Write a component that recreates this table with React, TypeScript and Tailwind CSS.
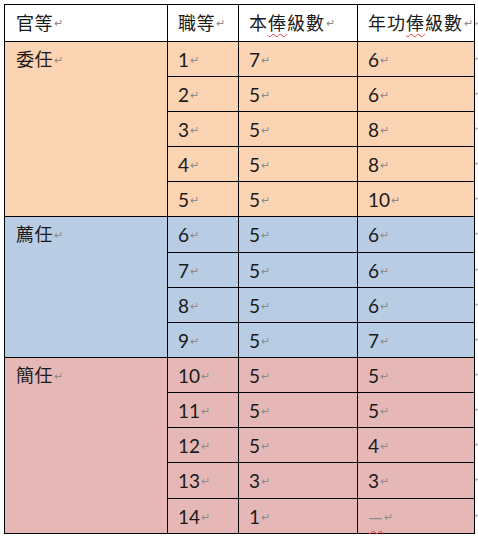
import React from 'react';

type Row = { grade: string; base: string; merit: string };

interface Group {
    name: string;
    bg: string;
    rows: Row[];
}

const groups: Group[] = [
    {
        name: '委任',
        bg: 'bg-[#fbd4b4]',
        rows: [
            { grade: '1', base: '7', merit: '6' },
            { grade: '2', base: '5', merit: '6' },
            { grade: '3', base: '5', merit: '8' },
            { grade: '4', base: '5', merit: '8' },
            { grade: '5', base: '5', merit: '10' },
        ],
    },
    {
        name: '薦任',
        bg: 'bg-[#b8cce4]',
        rows: [
            { grade: '6', base: '5', merit: '6' },
            { grade: '7', base: '5', merit: '6' },
            { grade: '8', base: '5', merit: '6' },
            { grade: '9', base: '5', merit: '7' },
        ],
    },
    {
        name: '簡任',
        bg: 'bg-[#e5b8b7]',
        rows: [
            { grade: '10', base: '5', merit: '5' },
            { grade: '11', base: '5', merit: '5' },
            { grade: '12', base: '5', merit: '4' },
            { grade: '13', base: '3', merit: '3' },
            { grade: '14', base: '1', merit: '—' },
        ],
    },
];

// a few rows are one pixel taller, as Word laid them out
const tall = new Set(['6', '13']);

const Mark = () => <span className="ml-[1px] text-[11px] text-[#8c8c8c] align-middle">↵</span>;

const Wavy: React.FC<{ children: React.ReactNode }> = ({ children }) => (
    <span className="underline decoration-wavy decoration-[#e04040] decoration-1 underline-offset-[3px]">{children}</span>
);

const cell = 'border border-black align-top p-0';
const num = 'h-[33px] flex items-center pl-[10px] pt-[1px] text-[19px] text-[#1a1a1a] leading-none';

const App: React.FC = () => {
    return (
        <div className="w-[478px] h-[536px] bg-white pt-[4px] pl-[4px] overflow-hidden font-['Lato','Noto_Sans_CJK_TC',sans-serif]">
            <table className="w-[474px] border-collapse table-fixed">
                <colgroup>
                    <col className="w-[163px]" />
                    <col className="w-[71px]" />
                    <col className="w-[119px]" />
                    <col className="w-[117px]" />
                    <col className="w-[4px]" />
                </colgroup>
                <tbody>
                    <tr className="h-[37px] bg-white">
                        <td className={cell}>
                            <div className="h-[35px] flex items-center pl-[11px] text-[18px] text-[#1a1a1a] leading-none tracking-[0.5px]">官等<Mark /></div>
                        </td>
                        <td className={cell}>
                            <div className="h-[35px] flex items-center pl-[10px] text-[18px] text-[#1a1a1a] leading-none tracking-[0.5px]">職等<Mark /></div>
                        </td>
                        <td className={cell}>
                            <div className="h-[35px] flex items-center pl-[10px] text-[18px] text-[#1a1a1a] leading-none tracking-[1px]">本<Wavy>俸</Wavy>級數<Mark /></div>
                        </td>
                        <td className={cell}>
                            <div className="h-[35px] flex items-center pl-[10px] text-[18px] text-[#1a1a1a] leading-none tracking-[1px]">年功<Wavy>俸</Wavy>級數<Mark /></div>
                        </td>
                        <td className="p-0 align-middle">
                            <div className="h-[35px] flex items-center text-[7px] leading-none text-[#8c8c8c]">↵</div>
                        </td>
                    </tr>
                    {groups.map((g) =>
                        g.rows.map((r, i) => (
                            <tr key={r.grade} className={`${tall.has(r.grade) ? 'h-[36px]' : 'h-[35px]'} ${g.bg}`}>
                                {i === 0 && (
                                    <td className={cell} rowSpan={g.rows.length}>
                                        <div className="h-[33px] flex items-center pl-[11px] pt-[1px] text-[18px] text-[#1a1a1a] leading-none tracking-[0.5px]">
                                            {g.name}
                                            <Mark />
                                        </div>
                                    </td>
                                )}
                                <td className={cell}>
                                    <div className={num}>{r.grade}<Mark /></div>
                                </td>
                                <td className={cell}>
                                    <div className={num}>{r.base}<Mark /></div>
                                </td>
                                <td className={cell}>
                                    <div className={num}>
                                        {r.merit === '—' ? (
                                            <span className="underline decoration-wavy decoration-[#e04040] decoration-1 underline-offset-[6px] text-[#8c8c8c]">—</span>
                                        ) : (
                                            r.merit
                                        )}
                                        <Mark />
                                    </div>
                                </td>
                                <td className="p-0 align-top bg-white">
                                    <div className="h-[33px] flex items-center text-[7px] leading-none text-[#8c8c8c]">↵</div>
                                </td>
                            </tr>
                        ))
                    )}
                </tbody>
            </table>
        </div>
    );
};

export default App;
